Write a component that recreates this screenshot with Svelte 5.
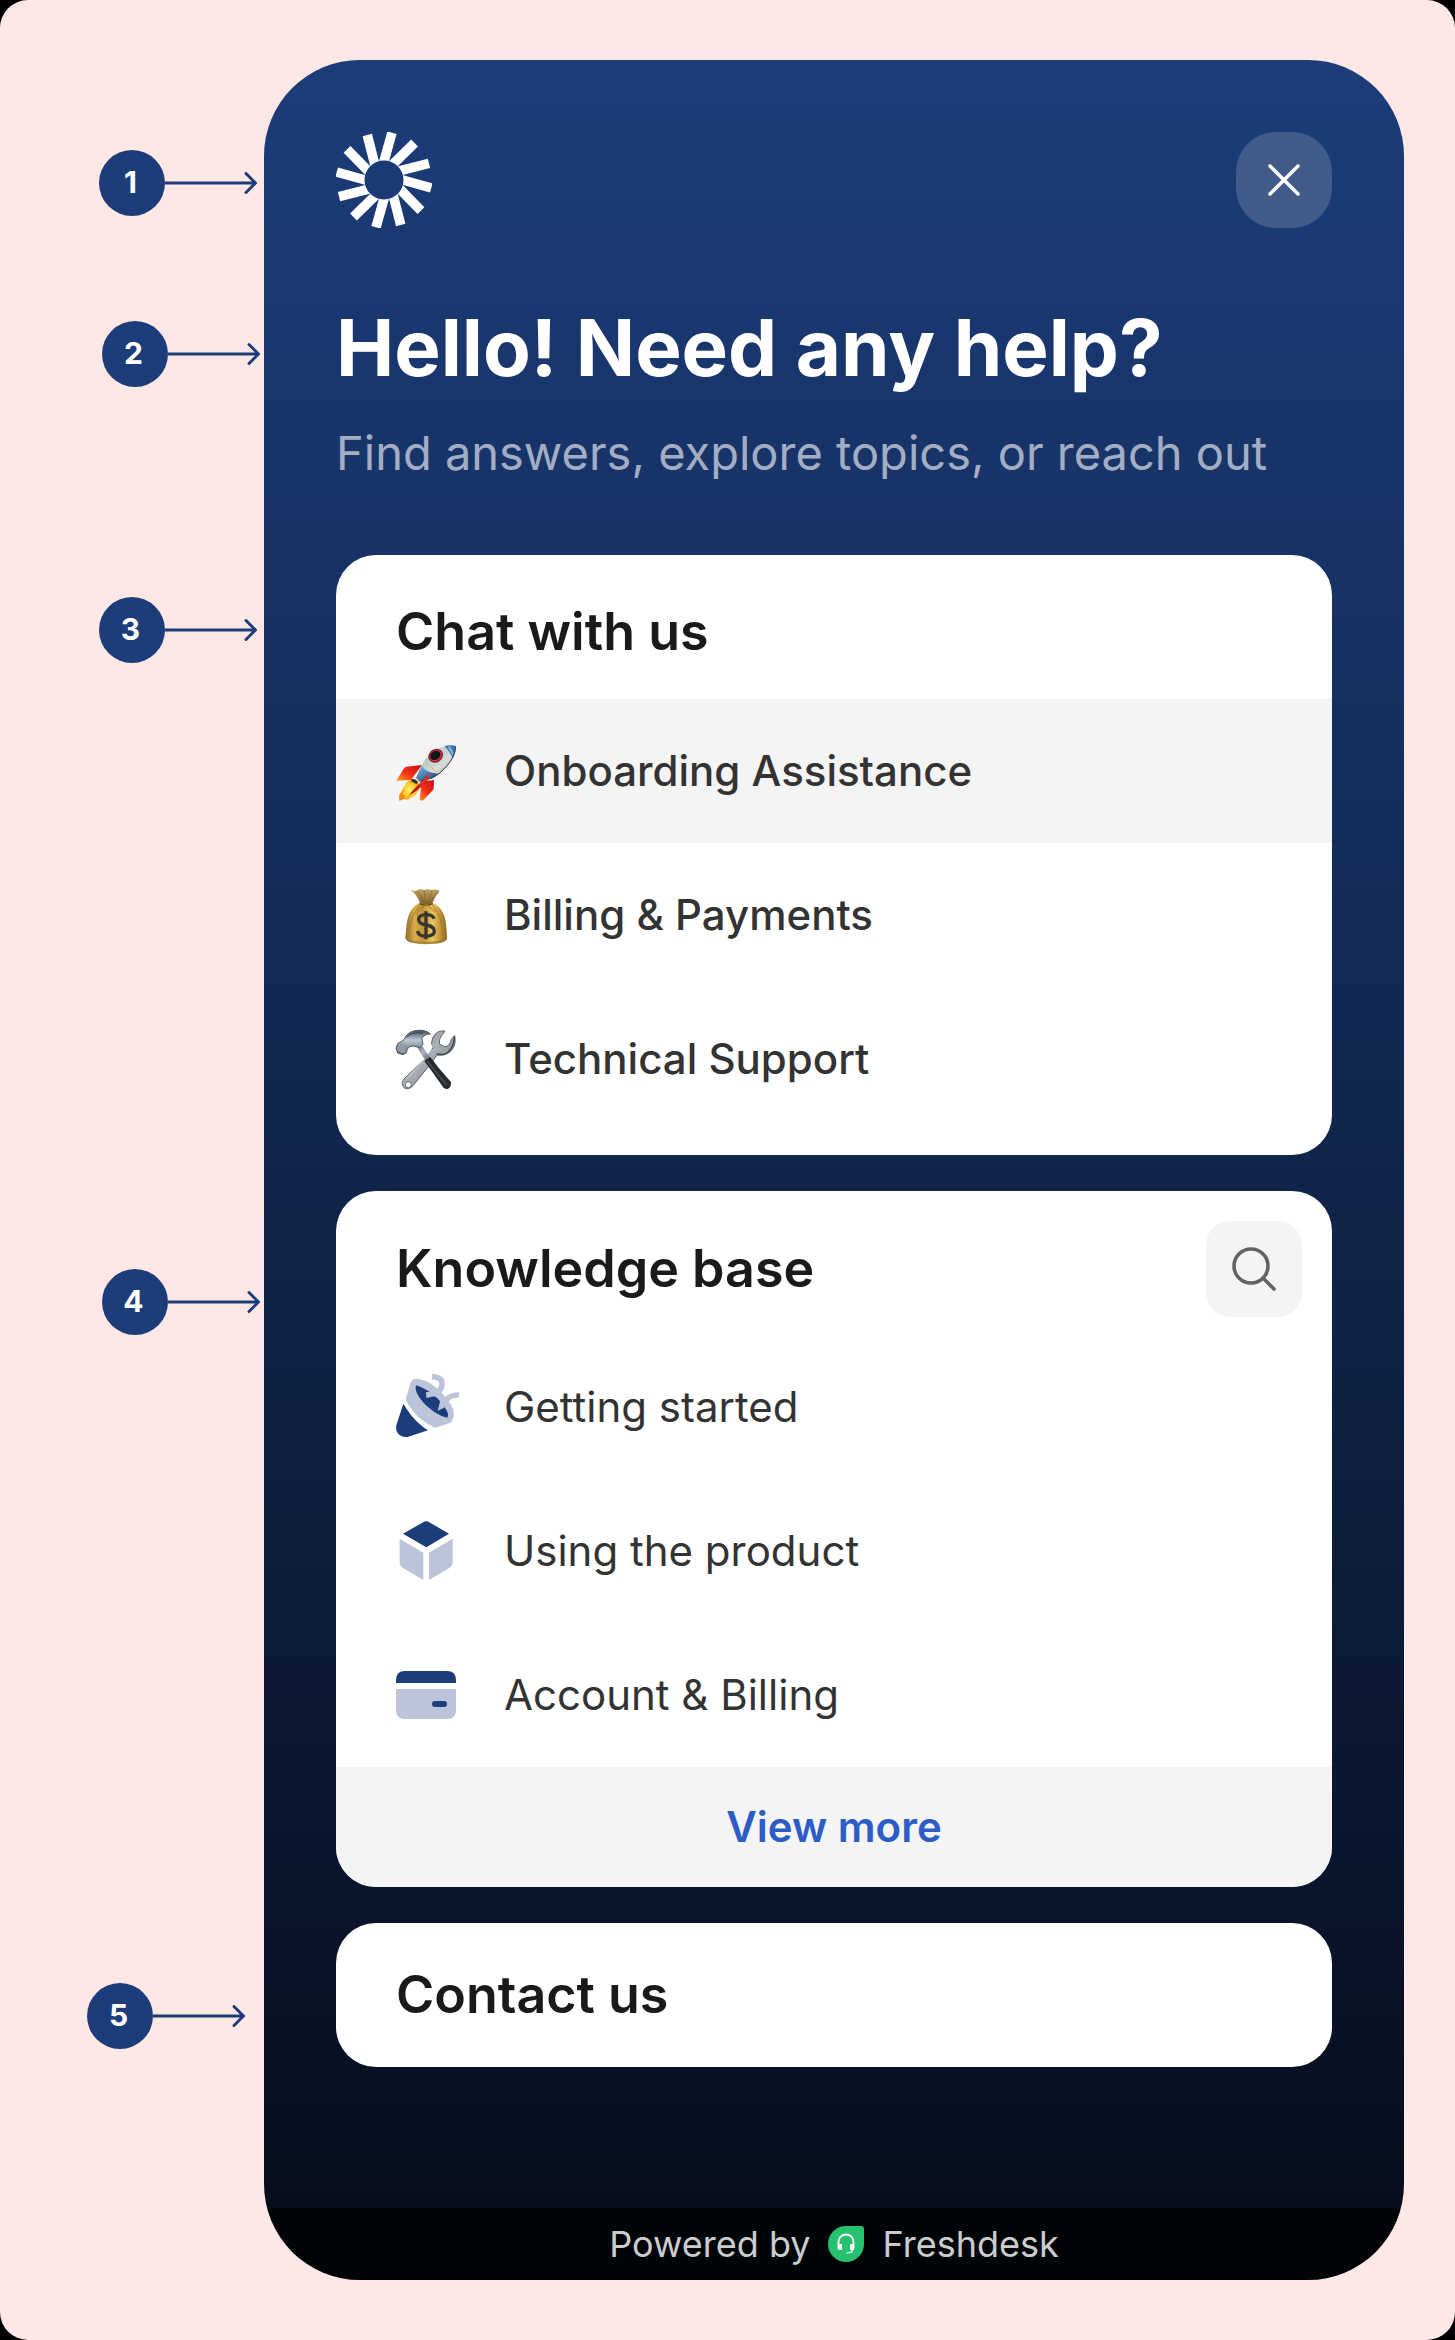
<script>
  const spokes = Array.from({ length: 12 }, (_, i) => i * 30);
  const chatTopics = [
    { icon: 'rocket', label: 'Onboarding Assistance', active: true },
    { icon: 'money', label: 'Billing & Payments' },
    { icon: 'tools', label: 'Technical Support' }
  ];
  const articles = [
    { icon: 'party', label: 'Getting started' },
    { icon: 'cube', label: 'Using the product' },
    { icon: 'card', label: 'Account & Billing' }
  ];
</script>

{#snippet callout(n)}
  <div class="callout callout-{n}">
    <span class="dot">{n}</span>
    <svg class="arrow" viewBox="0 0 92 24" aria-hidden="true">
      <path d="M0 12H90M81 2.500L90.500 12L81 21.500" />
    </svg>
  </div>
{/snippet}

{#snippet icon(name)}
  <svg class="icon" viewBox="0 0 180 180" aria-hidden="true">
    {#if name === 'rocket'}
      <defs>
        <linearGradient id="hull" x1="0" y1="0" x2="1" y2="1">
          <stop offset="0" stop-color="#4d86bd" /><stop offset=".35" stop-color="#b9cbd6" />
          <stop offset=".6" stop-color="#d9dcd6" /><stop offset="1" stop-color="#4b535b" />
        </linearGradient>
        <linearGradient id="fin" x1="1" y1="0" x2="0" y2="1">
          <stop offset="0" stop-color="#c80d12" /><stop offset=".55" stop-color="#f5301a" /><stop offset="1" stop-color="#ffa31c" />
        </linearGradient>
        <linearGradient id="tail" x1="0" y1="0" x2="1" y2="1">
          <stop offset="0" stop-color="#8fbce4" /><stop offset=".5" stop-color="#3f78b3" /><stop offset="1" stop-color="#1c3856" />
        </linearGradient>
        <radialGradient id="flame"><stop offset="0" stop-color="#fff36a" /><stop offset=".65" stop-color="#ffc825" /><stop offset="1" stop-color="#f58a12" /></radialGradient>
      </defs>
      <path d="M78 72L30 77Q22 82 20 88L1 119L45 117Z" fill="url(#fin)" />
      <path d="M79 116Q99 121 114 116L113 145L80 179L71 177L75 140L67 137Z" fill="url(#fin)" />
      <path d="M48 115L33 123L20 143L9 164L10 180L24 174L35 176L59 162L73 137L64 121Z" fill="url(#flame)" />
      <path d="M25 145L14 164L24 163L18 175M35 168L57 147" fill="none" stroke="#f37a0e" stroke-width="3" />
      <path d="M180 15Q151 8 120 28Q89 46 77 74L60 110L70 123L101 115Q132 101 151 79Q180 47 180 15Z" fill="url(#hull)" />
      <path d="M77 74L60 110L70 123L101 115Q119 107 133 96Q94 101 77 74Z" fill="url(#tail)" />
      <path d="M146 15Q165 11 180 15Q180 35 171 52Q160 31 146 15Z" fill="#3e78ae" />
      <path d="M158 17Q166 27 171 40" fill="none" stroke="#8cbbe3" stroke-width="6" />
      <path d="M179 17Q177 47 151 77Q132 100 105 113" fill="none" stroke="#33414c" stroke-width="3" />
      <path d="M84 64Q108 78 125 100M60 112L71 122" fill="none" stroke="#dfc45d" stroke-width="3" />
      <ellipse cx="119" cy="44" rx="23" ry="20" transform="rotate(-35 119 44)" fill="#8d2029" />
      <ellipse cx="119" cy="44" rx="19" ry="16" transform="rotate(-35 119 44)" fill="#d6382f" />
      <ellipse cx="118" cy="43" rx="16" ry="13" transform="rotate(-35 118 43)" fill="#11151b" />
      <path d="M47 113L60 116L66 124L61 129L46 121Z" fill="#2b3438" />
      <path d="M105 96Q81 112 69 130Q49 148 41 162Q66 151 81 127Q96 119 105 96Z" fill="#ba1715" />
      <path d="M102 100L70 134" stroke="#ef4930" stroke-width="4" />
    {:else if name === 'money'}
      <defs>
        <linearGradient id="bag">
          <stop offset="0" stop-color="#8e6b26" /><stop offset=".22" stop-color="#d7ad4b" /><stop offset=".42" stop-color="#c19534" />
          <stop offset=".65" stop-color="#eac65f" /><stop offset=".85" stop-color="#be9135" /><stop offset="1" stop-color="#8b6925" />
        </linearGradient>
        <linearGradient id="bagneck" x1="0" y1="0" x2="0" y2="1">
          <stop offset="0" stop-color="#c4a364" /><stop offset="1" stop-color="#83612b" />
        </linearGradient>
      </defs>
      <path d="M47 14Q54 20 61 17Q72 10 84 15Q94 10 106 15Q118 12 129 16Q131 23 121 31L107 58H73Q67 34 47 17Z" fill="url(#bagneck)" />
      <path d="M63 18Q76 31 82 52M84 16L89 54M108 17L97 54M123 21L103 55" fill="none" stroke="#725129" stroke-width="2" opacity=".7" />
      <path d="M72 54Q90 63 109 54Q145 67 150 118Q153 142 153 161Q146 176 91 176Q37 177 28 160Q29 147 32 118Q38 68 72 54Z" fill="url(#bag)" />
      <path d="M70 65Q43 90 40 151M84 64Q67 72 62 93M109 61Q138 90 141 151M98 63L117 81" fill="none" stroke="#9c742a" stroke-width="4" opacity=".55" />
      <path d="M70 56Q90 65 111 56" fill="none" stroke="#684c23" stroke-width="4" />
      <path d="M29 156Q36 167 55 168Q105 177 146 163L153 157Q151 174 122 176Q59 181 34 169Z" fill="#8f6c26" opacity=".65" />
      <path d="M114 101Q110 89 91 89Q68 89 68 104Q68 116 91 120Q115 124 115 139Q115 153 91 154Q67 154 65 138M90 79V163" fill="none" stroke="#3a3531" stroke-width="10" />
    {:else if name === 'tools'}
      <defs>
        <linearGradient id="steel" x1="0" y1="0" x2="1" y2="1">
          <stop offset="0" stop-color="#68727d" /><stop offset=".45" stop-color="#adb2ba" /><stop offset="1" stop-color="#58606b" />
        </linearGradient>
        <linearGradient id="head" x1="0" y1="0" x2="0" y2="1">
          <stop offset="0" stop-color="#42515f" /><stop offset=".4" stop-color="#bcc7d0" /><stop offset="1" stop-color="#4b5a68" />
        </linearGradient>
      </defs>
      <path fill-rule="evenodd" d="M147 6Q120 3 110 27Q103 42 111 57L85 92L24 150Q13 163 24 176Q37 185 51 170L102 107L123 78Q151 83 169 61Q181 44 176 20L166 31Q162 51 147 54L130 45Q128 30 137 20ZM37 158A9 9 0 1 1 37 176A9 9 0 1 1 37 158Z" fill="url(#steel)" stroke="#5d646d" stroke-width="3" />
      <path d="M113 44Q107 66 89 88L33 148" fill="none" stroke="#dfe2e4" stroke-width="3" opacity=".7" />
      <path d="M175 22Q174 66 142 77L122 75" fill="none" stroke="#3f464e" stroke-width="4" />
      <path d="M63 54L77 48L105 90L89 97Z" fill="url(#steel)" />
      <path d="M85 96L102 84Q114 96 125 113L165 159Q166 177 153 181L143 177L115 137Z" fill="#262a2c" />
      <path d="M94 97L151 167" stroke="#4a4d4e" stroke-width="5" />
      <path d="M6 43L17 37L25 31L30 21Q43 4 69 4Q91 3 103 15Q85 15 77 28L81 45L72 56L52 51L41 53L34 60L31 71L21 77L5 72L0 57Z" fill="url(#head)" stroke="#4d5760" stroke-width="3" />
      <path d="M9 43Q24 43 30 59Q31 70 22 73Q5 71 3 56Z" fill="#909ba7" />
      <path d="M32 24Q49 7 82 13" fill="none" stroke="#303e4b" stroke-width="3" />
    {:else if name === 'party'}
      <path d="M22 80C42 113 63 139 96 160L37 179C14 184-4 167 1 145Z" fill="#1c3d79" />
      <path fill-rule="evenodd" d="M44 17Q51 1 72 7C114 15 153 60 171 95Q179 125 162 138L117 152C79 134 50 109 29 68Z" fill="#bcc4d9" />
      <path d="M61 25C47 46 102 111 153 122C169 113 124 46 61 25Z" fill="#1c3d79" />
      <path d="M90 45L91 63L107 59L128 57L132 74L125 101L145 92L138 68L119 44Z" fill="#bcc4d9" />
      <path d="M108-1C148 0 142 30 125 47M189 54Q162 53 151 70" fill="none" stroke="#bcc4d9" stroke-width="17" />
    {:else if name === 'cube'}
      <path d="M21 38L79 5Q91-3 102 5L159 38L91 79Z" fill="#1c3d79" />
      <path d="M11 53L82 95V177L21 141Q11 134 11 122ZM170 53L99 95V177L160 141Q170 134 170 122Z" fill="#bcc4d9" />
    {:else}
      <path d="M0 54V45Q0 18 27 18H153Q180 18 180 45V54Z" fill="#1c3d79" />
      <path d="M0 72H180V135Q180 162 153 162H27Q0 162 0 135Z" fill="#bcc4d9" />
      <rect x="108" y="108" width="45" height="18" rx="9" fill="#1c3d79" />
    {/if}
  </svg>
{/snippet}

<main class="page">
  <section class="panel" aria-label="Help widget">
    <div class="content">
      <header class="topbar">
        {@render callout(1)}
        <svg class="logo" viewBox="0 0 96 96" role="img" aria-label="Company logo">
          <defs>
            <mask id="hub"><rect width="96" height="96" fill="#fff" /><circle cx="48" cy="48" r="19.500" fill="#000" /></mask>
          </defs>
          <g mask="url(#hub)" stroke="#fff" stroke-width="9.600">
            {#each spokes as angle}
              <path d="M47.500 31L56 0.700" transform="rotate({angle} 48 48)" />
            {/each}
          </g>
        </svg>
        <button class="close" aria-label="Close">
          <svg viewBox="0 0 32 32" aria-hidden="true"><path d="M2 2L30 30M30 2L2 30" /></svg>
        </button>
      </header>

      <div class="intro">
        {@render callout(2)}
        <h1>Hello! Need any help?</h1>
        <p>Find answers, explore topics, or reach out</p>
      </div>

      <div class="cards">
        <section class="card chat">
          {@render callout(3)}
          <div class="card-head"><h2>Chat with us</h2></div>
          {#each chatTopics as topic}
            <button class="row medium" class:active={topic.active}>
              {@render icon(topic.icon)}<span>{topic.label}</span>
            </button>
          {/each}
        </section>

        <section class="card">
          {@render callout(4)}
          <div class="card-head">
            <h2>Knowledge base</h2>
            <button class="search" aria-label="Search">
              <svg viewBox="0 0 46 46" aria-hidden="true"><circle cx="20" cy="20" r="17" /><path d="M32 32L43 43" /></svg>
            </button>
          </div>
          {#each articles as article}
            <button class="row">
              {@render icon(article.icon)}<span>{article.label}</span>
            </button>
          {/each}
          <button class="more">View more</button>
        </section>

        <section class="card">
          {@render callout(5)}
          <div class="card-head single"><h2>Contact us</h2></div>
        </section>
      </div>
    </div>

    <footer class="footer">
      <span>Powered by</span>
      <svg viewBox="0 0 36 36" aria-hidden="true">
        <path d="M18 0H33Q36 0 36 3V18A18 18 0 1 1 18 0Z" fill="#26c16f" />
        <path d="M10.500 19V16A7.500 7.500 0 0 1 25.500 16V19" fill="none" stroke="#fff" stroke-width="1.800" />
        <path d="M9.500 18H14V24H11.500Q9.500 24 9.500 22ZM22 18H26.500V22Q26.500 24 24.500 24H22Z" fill="#fff" />
        <path d="M25 23Q24.500 27 18.500 27" fill="none" stroke="#fff" stroke-width="1.200" />
      </svg>
      <span>Freshdesk</span>
    </footer>
  </section>
</main>

<style>
  :global(body) { background: #000; }
  * { box-sizing: border-box; }
  .page {
    padding: 60px 51px 60px 264px;
    background: #fee8e6;
    border-radius: 28px;
    font-family: Inter, "Liberation Sans", sans-serif;
  }
  /* The footer strip is a background layer so that the panel's corners shape it. */
  .panel {
    border-radius: 96px;
    background:
      linear-gradient(#010407, #010407) bottom / 100% 72px no-repeat,
      linear-gradient(180deg, #1c3d7a 0%, #10244a 52%, #050c19 100%);
  }
  .content { padding: 72px 72px 141px; }
  h1, h2, p { margin: 0; }
  button { border: 0; margin: 0; font-family: inherit; cursor: pointer; }
  .topbar, .intro, .card { position: relative; }
  .topbar {
    display: flex;
    align-items: center;
    justify-content: space-between;
    margin-bottom: 72px;
  }
  .logo { width: 96px; height: 96px; }
  .close {
    display: grid;
    place-items: center;
    width: 96px;
    height: 96px;
    padding: 0;
    border-radius: 40px;
    background: #425b89;
  }
  .close svg { width: 32px; height: 32px; fill: none; stroke: #fff; stroke-width: 3.500; stroke-linecap: round; }
  .intro { margin-bottom: 72px; }
  h1 { color: #fff; font-size: 78px; line-height: 96px; font-weight: 700; white-space: nowrap; }
  .intro p { margin-top: 27px; color: #a3adc3; font-size: 47px; line-height: 60px; white-space: nowrap; }
  .cards { display: flex; flex-direction: column; gap: 36px; }
  .card { border-radius: 40px; background: #fff; }
  .chat { padding-bottom: 24px; }
  .card-head {
    display: flex;
    align-items: center;
    justify-content: space-between;
    min-height: 144px;
    padding: 30px 30px 18px 60px;
  }
  .chat .card-head { padding-top: 28px; }
  .single { padding: 24px 60px; }
  h2 { color: #1a1a1a; font-size: 52px; line-height: 64px; font-weight: 600; }
  .row {
    display: flex;
    align-items: center;
    gap: 48px;
    width: 100%;
    height: 144px;
    padding: 0 60px;
    background: transparent;
    color: #333;
    font-size: 42px;
    line-height: 54px;
    text-align: left;
  }
  .medium { font-weight: 500; }
  .active { background: #f4f4f4; }
  .icon { flex: none; width: 60px; height: 60px; overflow: visible; }
  .search {
    display: grid;
    place-items: center;
    width: 96px;
    height: 96px;
    padding: 0;
    border-radius: 24px;
    background: #f4f4f4;
  }
  .search svg { width: 46px; height: 46px; fill: none; stroke: #636363; stroke-width: 3.600; stroke-linecap: round; }
  .more {
    display: block;
    width: 100%;
    height: 120px;
    padding: 0;
    border-radius: 0 0 40px 40px;
    background: #f4f4f4;
    color: #2c5cc5;
    font-size: 42px;
    line-height: 54px;
    font-weight: 600;
  }
  .footer {
    display: flex;
    align-items: center;
    justify-content: center;
    gap: 18px;
    height: 72px;
    color: #cbcccd;
    font-size: 36px;
    line-height: 48px;
  }
  .footer svg { width: 36px; height: 36px; }

  /* Numbered markers sit outside the panel, level with the part they name. */
  .callout {
    position: absolute;
    right: 100%;
    display: flex;
    align-items: center;
    margin-right: 79px;
  }
  .callout-1 { top: 18px; }
  .callout-2 { top: 21px; margin-right: 76px; }
  .callout-3 { top: 42px; }
  .callout-4 { top: 78px; margin-right: 76px; }
  .callout-5 { top: 60px; margin-right: 91px; }
  .dot {
    display: grid;
    place-items: center;
    width: 66px;
    height: 66px;
    padding: 0 3px 2px 0;
    border-radius: 50%;
    background: #1c3d79;
    color: #fff;
    font-size: 30px;
    line-height: 36px;
    font-weight: 700;
  }
  .arrow { width: 92px; height: 24px; fill: none; stroke: #1c3d79; stroke-width: 3; stroke-linecap: round; stroke-linejoin: round; }
</style>
